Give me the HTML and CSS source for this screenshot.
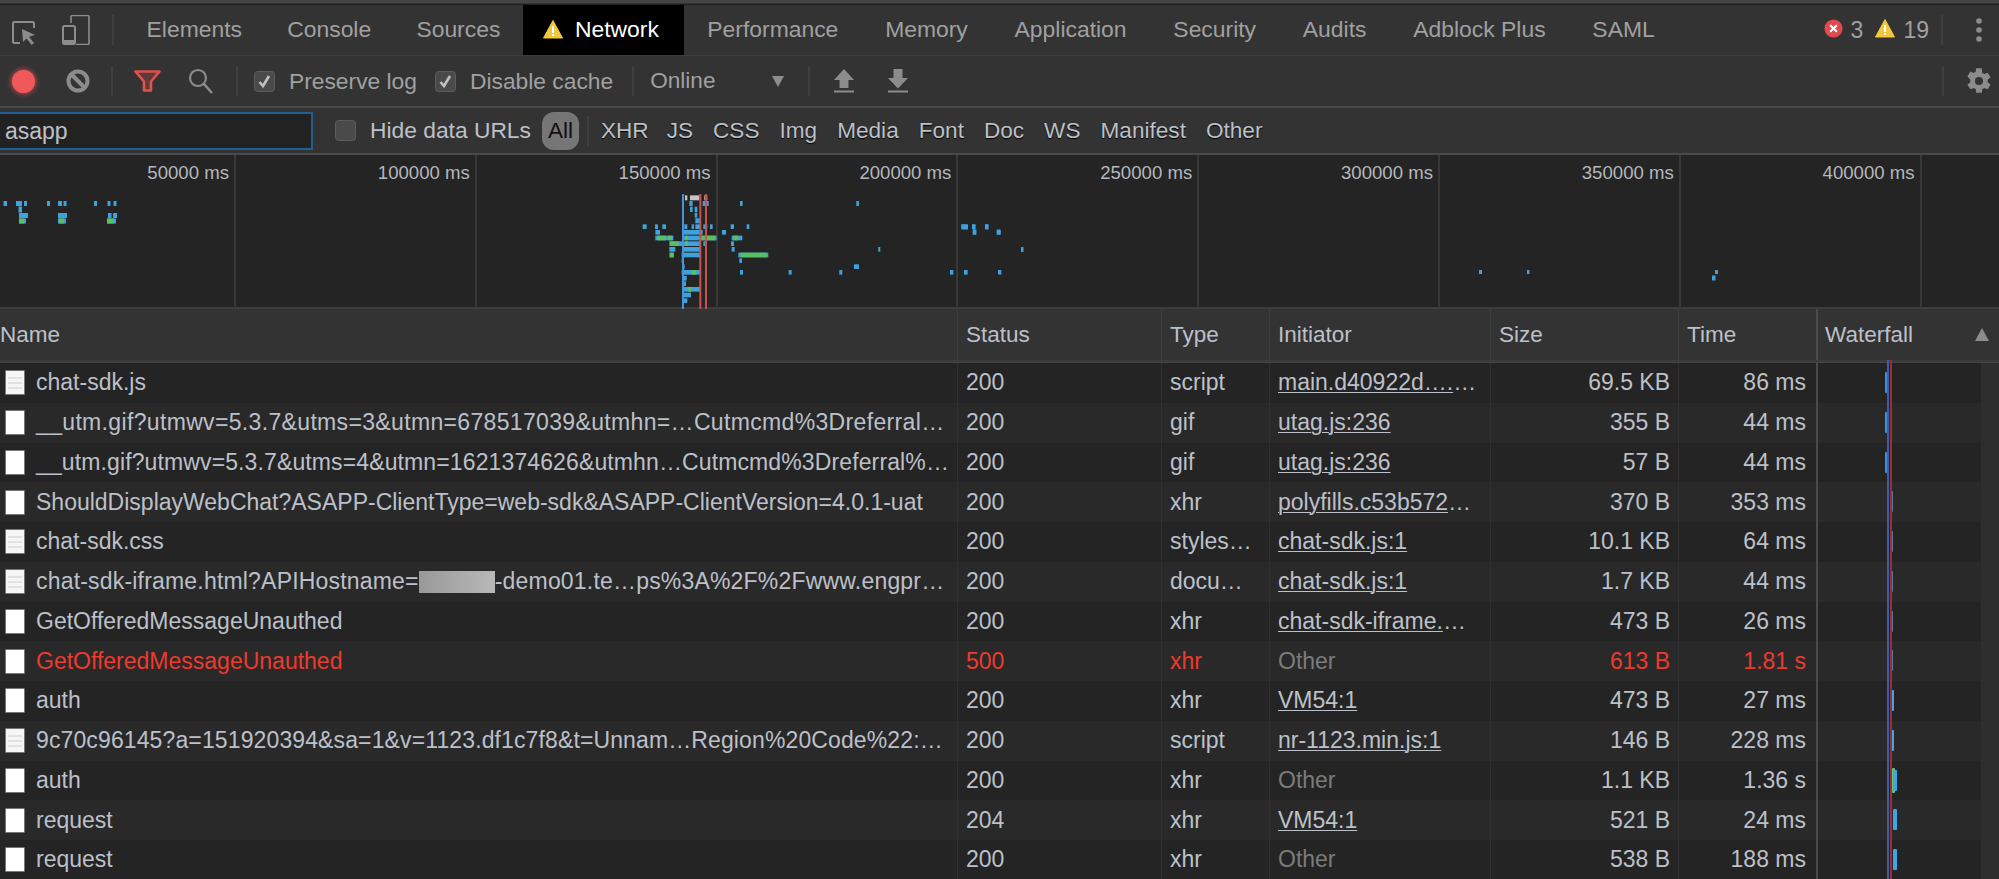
FILE: index.html
```html
<!DOCTYPE html>
<html lang="en">
<head>
<meta charset="utf-8">
<title>Network</title>
<link rel="stylesheet" href="styles.css">
</head>
<body>
<div class="topline"></div>
<nav class="tabbar">
  <svg class="ic-inspect" viewBox="0 0 25 24"><path d="M8 22H2.5A1.5 1.5 0 0 1 1 20.5V2.5A1.5 1.5 0 0 1 2.5 1h18A1.5 1.5 0 0 1 22 2.5V7" fill="none" stroke="#8c8c8c" stroke-width="2"/><path d="M10 8l13 6-6 1.8 5 6.2-2.4 2-5-6.4L11 21z" fill="#8c8c8c"/></svg>
  <svg class="ic-device" viewBox="0 0 28 30"><path d="M9 8V2a1.5 1.5 0 0 1 1.5-1.5h15A1.5 1.5 0 0 1 27 2v26a1.5 1.5 0 0 1-1.5 1.5H14" fill="none" stroke="#8c8c8c" stroke-width="1.6"/><rect x="1" y="11" width="12" height="18" rx="1.5" fill="none" stroke="#8c8c8c" stroke-width="2"/><rect x="2" y="25" width="10" height="3" fill="#8c8c8c"/></svg>
  <span class="sep sep-tab"></span>
  <a class="tab">Elements</a>
  <a class="tab">Console</a>
  <a class="tab">Sources</a>
  <a class="tab tab-on"><svg class="ic-warn" viewBox="0 0 20 20"><path d="M10 1.5 19.5 19H.5z" fill="#f4c63d" stroke="#f4c63d" stroke-linejoin="round"/><rect x="9" y="7" width="2" height="7" fill="#fff"/><rect x="9" y="15" width="2" height="2" fill="#fff"/></svg>Network</a>
  <a class="tab">Performance</a>
  <a class="tab">Memory</a>
  <a class="tab">Application</a>
  <a class="tab">Security</a>
  <a class="tab">Audits</a>
  <a class="tab">Adblock Plus</a>
  <a class="tab">SAML</a>
  <div class="counts">
    <svg class="ic-err" viewBox="0 0 20 20"><circle cx="10" cy="10" r="9.5" fill="#e04a4e"/><path d="M6.5 6.5l7 7M13.500 6.500l-7 7" stroke="#fff" stroke-width="2.200"/></svg>
    <span class="count">3</span>
    <svg class="ic-warn2" viewBox="0 0 20 20"><path d="M10 1.500 19.500 19H.5z" fill="#f4c63d" stroke="#f4c63d" stroke-linejoin="round"/><rect x="9" y="7" width="2" height="7" fill="#fff"/><rect x="9" y="15" width="2" height="2" fill="#fff"/></svg>
    <span class="count">19</span>
    <span class="sep sep-count"></span>
    <svg class="ic-dots" viewBox="0 0 6 24"><circle cx="3" cy="3" r="2.800" fill="#8c8c8c"/><circle cx="3" cy="12" r="2.800" fill="#8c8c8c"/><circle cx="3" cy="21" r="2.800" fill="#8c8c8c"/></svg>
  </div>
</nav>
<div class="toolbar">
  <span class="record"></span>
  <svg class="ic-clear" viewBox="0 0 24 24"><circle cx="12" cy="12" r="9.500" fill="none" stroke="#8c8c8c" stroke-width="4"/><path d="M5 5l14 14" stroke="#8c8c8c" stroke-width="4"/></svg>
  <span class="sep sep-a"></span>
  <svg class="ic-filter" viewBox="0 0 27 22"><path d="M1.500 1.500h24L17 11.500V20.500h-7V11.500z" fill="#5d3b39" stroke="#e0524c" stroke-width="2.600" stroke-linejoin="round"/></svg>
  <svg class="ic-search" viewBox="0 0 25 26"><circle cx="10" cy="10" r="8" fill="none" stroke="#8c8c8c" stroke-width="2.200"/><path d="M16 16l8 9" stroke="#8c8c8c" stroke-width="2.600"/></svg>
  <span class="sep sep-b"></span>
  <label class="check check-p"><svg class="box" viewBox="0 0 21 21"><rect x=".5" y=".5" width="20" height="20" rx="3" fill="#4a4a4a" stroke="#5c5c5c"/><path d="M5.500 11l3.500 4 6-10" fill="none" stroke="#c0c0c0" stroke-width="2.600"/></svg>Preserve log</label>
  <label class="check check-d"><svg class="box" viewBox="0 0 21 21"><rect x=".5" y=".5" width="20" height="20" rx="3" fill="#4a4a4a" stroke="#5c5c5c"/><path d="M5.500 11l3.500 4 6-10" fill="none" stroke="#c0c0c0" stroke-width="2.600"/></svg>Disable cache</label>
  <span class="sep sep-c"></span>
  <span class="throttle">Online</span>
  <span class="caret"></span>
  <span class="sep sep-d"></span>
  <svg class="ic-up" viewBox="0 0 20 24"><path d="M10 0l10 11h-5.500v8h-9v-8H0z" fill="#8c8c8c"/><rect y="21.500" width="20" height="2" fill="#8c8c8c"/></svg>
  <svg class="ic-down" viewBox="0 0 20 24"><path d="M10 19.500L0 9h5.500V0h9v9H20z" fill="#8c8c8c"/><rect y="21.500" width="20" height="2" fill="#8c8c8c"/></svg>
  <span class="sep sep-e"></span>
  <svg class="ic-gear" viewBox="0 0 24 24"><path fill="#8c8c8c" d="M19.400 13a7.700 7.700 0 0 0 0-2l2.500-1.900-2.400-4.200-3 1.200a7.600 7.600 0 0 0-1.700-1L14.400 1H9.600l-.4 3.100a7.600 7.600 0 0 0-1.700 1l-3-1.200-2.400 4.200L4.600 11a7.700 7.700 0 0 0 0 2l-2.500 1.900 2.400 4.200 3-1.200a7.600 7.600 0 0 0 1.700 1l.4 3.100h4.800l.4-3.100a7.600 7.600 0 0 0 1.700-1l3 1.200 2.400-4.200zM12 15.500a3.500 3.500 0 1 1 0-7 3.500 3.500 0 0 1 0 7z"/></svg>
</div>
<div class="filterbar">
  <div class="search-input">asapp</div>
  <label class="check check-h"><svg class="box" viewBox="0 0 21 21"><rect x=".5" y=".5" width="20" height="20" rx="3" fill="#4a4a4a" stroke="#5c5c5c"/></svg>Hide data URLs</label>
  <span class="pill">All</span>
  <span class="sep sep-f"></span>
  <span class="ft">XHR</span><span class="ft">JS</span><span class="ft">CSS</span><span class="ft">Img</span><span class="ft">Media</span><span class="ft">Font</span><span class="ft">Doc</span><span class="ft">WS</span><span class="ft">Manifest</span><span class="ft">Other</span>
</div>
<section class="overview">
  <div class="ov-grid">
    <div class="ov-cell">50000 ms</div>
    <div class="ov-cell">100000 ms</div>
    <div class="ov-cell">150000 ms</div>
    <div class="ov-cell">200000 ms</div>
    <div class="ov-cell">250000 ms</div>
    <div class="ov-cell">300000 ms</div>
    <div class="ov-cell">350000 ms</div>
    <div class="ov-cell">400000 ms</div>
    <div class="ov-cell ov-last"></div>
  </div>
  <svg class="ov-chart" viewBox="0 155 1999 154">
    <g class="d-b">
      <rect x="3.500" y="201" width="3.500" height="5"/><rect x="16" y="201" width="6" height="5"/><rect x="24" y="201" width="3" height="5"/><rect x="47" y="201" width="3" height="5"/><rect x="58" y="201" width="4" height="5"/><rect x="63.500" y="201" width="3" height="5"/><rect x="94" y="201" width="3" height="5"/><rect x="107.500" y="201" width="3" height="5"/><rect x="113.500" y="201" width="3" height="5"/>
      <rect x="18.500" y="206.500" width="3.500" height="6"/>
      <rect x="19" y="213" width="9" height="5"/><rect x="58" y="213" width="9" height="5"/><rect x="108" y="213" width="3.500" height="5"/><rect x="113" y="213" width="4" height="5"/>
      <rect x="19" y="218.500" width="7" height="5"/><rect x="58" y="218.500" width="8" height="5"/><rect x="107" y="218.500" width="9" height="5"/>
    </g>
    <g class="d-g"><rect x="19" y="218.500" width="5" height="5"/><rect x="59" y="218.500" width="5" height="5"/><rect x="107" y="218.500" width="7" height="5"/></g>
    <g transform="translate(620 180) scale(.3333)">
      <g class="d-w"><rect x="195" y="46" width="7" height="15"/><rect x="210" y="46" width="28" height="15"/><rect x="253" y="46" width="9" height="15"/></g>
      <g class="d-b">
        <rect x="208" y="63" width="10" height="15"/><rect x="248" y="63" width="18" height="15"/><rect x="360" y="63" width="8" height="15"/><rect x="709" y="63" width="8" height="15"/>
        <rect x="210" y="80" width="8" height="16"/><rect x="224" y="80" width="8" height="16"/>
        <rect x="224" y="98" width="8" height="15"/>
        <rect x="226" y="115" width="14" height="15"/>
        <rect x="68" y="133" width="12" height="14"/><rect x="105" y="133" width="9" height="14"/><rect x="127" y="133" width="11" height="14"/><rect x="193" y="133" width="9" height="14"/><rect x="215" y="133" width="7" height="14"/><rect x="226" y="133" width="14" height="14"/><rect x="250" y="133" width="12" height="14"/><rect x="270" y="133" width="8" height="14"/><rect x="332" y="133" width="10" height="14"/><rect x="380" y="133" width="8" height="14"/><rect x="1024" y="133" width="18" height="14"/><rect x="1056" y="133" width="10" height="14"/><rect x="1095" y="133" width="10" height="14"/>
        <rect x="106" y="150" width="14" height="14"/><rect x="192" y="150" width="56" height="14"/><rect x="306" y="150" width="12" height="14"/><rect x="1058" y="150" width="10" height="14"/><rect x="1130" y="150" width="12" height="14"/>
        <rect x="106" y="167" width="54" height="14"/><rect x="190" y="167" width="100" height="14"/><rect x="335" y="167" width="32" height="14"/>
        <rect x="148" y="184" width="92" height="14"/><rect x="250" y="184" width="6" height="14"/><rect x="333" y="184" width="9" height="14"/>
        <rect x="148" y="201" width="18" height="14"/><rect x="190" y="201" width="50" height="14"/><rect x="335" y="201" width="9" height="14"/><rect x="775" y="201" width="6" height="14"/>
        <rect x="148" y="218" width="14" height="14"/><rect x="185" y="218" width="55" height="14"/><rect x="355" y="218" width="90" height="14"/>
        <rect x="185" y="235" width="5" height="14"/><rect x="358" y="235" width="8" height="14"/>
        <rect x="188" y="253" width="6" height="14"/><rect x="702" y="253" width="15" height="14"/>
        <rect x="185" y="270" width="55" height="14"/><rect x="360" y="270" width="9" height="14"/><rect x="506" y="270" width="9" height="14"/><rect x="658" y="270" width="9" height="14"/><rect x="990" y="270" width="10" height="14"/><rect x="1032" y="270" width="11" height="14"/><rect x="1136" y="270" width="8" height="14"/>
        <rect x="190" y="288" width="10" height="14"/>
        <rect x="190" y="304" width="8" height="14"/>
        <rect x="186" y="321" width="54" height="14"/>
        <rect x="190" y="338" width="23" height="14"/>
        <rect x="192" y="355" width="10" height="14"/>
      </g>
      <g class="d-g">
        <rect x="112" y="167" width="26" height="14"/><rect x="144" y="167" width="12" height="14"/><rect x="195" y="167" width="8" height="14"/><rect x="245" y="167" width="40" height="14"/><rect x="340" y="167" width="15" height="14"/>
        <rect x="150" y="184" width="26" height="14"/><rect x="196" y="184" width="8" height="14"/>
        <rect x="150" y="218" width="10" height="14"/><rect x="362" y="218" width="78" height="14"/>
        <rect x="215" y="270" width="14" height="14"/><rect x="205" y="321" width="8" height="14"/>
      </g>
      <rect class="l-b" x="186" y="42" width="6" height="345"/>
      <rect class="l-r" x="238" y="42" width="6" height="345"/>
      <rect class="l-r" x="255" y="42" width="6" height="345"/>
    </g>
    <g class="d-b">
      <rect x="961.500" y="224.500" width="6.500" height="5"/><rect x="972" y="224.500" width="3.500" height="5"/><rect x="985" y="224.500" width="3.500" height="5"/>
      <rect x="973" y="229.500" width="3.500" height="5"/><rect x="997" y="229.500" width="3.500" height="5"/>
      <rect x="1021" y="247" width="2.500" height="5"/>
      <rect x="998" y="270" width="3" height="4"/><rect x="1479" y="270" width="3" height="4"/><rect x="1527" y="270" width="2.500" height="4"/><rect x="1715" y="270" width="3" height="4"/>
      <rect x="1712" y="275.500" width="3.500" height="5"/>
    </g>
  </svg>
</section>
<section class="table">
  <div class="row head">
    <div>Name</div><div>Status</div><div>Type</div><div>Initiator</div><div>Size</div><div>Time</div><div class="wf-head">Waterfall<span class="sort"></span></div>
  </div>
  <div class="double"></div>
  <div class="rows">
    <div class="row"><div class="name"><i class="file lines"></i><span>chat-sdk.js</span></div><div>200</div><div>script</div><div><u>main.d40922d….</u>…</div><div class="num">69.5 KB</div><div class="num">86 ms</div><div class="wf"><b class="bar early"></b></div></div>
    <div class="row"><div class="name"><i class="file"></i><span class="fit-a">__utm.gif?utmwv=5.3.7&amp;utms=3&amp;utmn=678517039&amp;utmhn=…Cutmcmd%3Dreferral…</span></div><div>200</div><div>gif</div><div><u>utag.js:236</u></div><div class="num">355 B</div><div class="num">44 ms</div><div class="wf"><b class="bar early"></b></div></div>
    <div class="row"><div class="name"><i class="file"></i><span class="fit-b">__utm.gif?utmwv=5.3.7&amp;utms=4&amp;utmn=1621374626&amp;utmhn…Cutmcmd%3Dreferral%…</span></div><div>200</div><div>gif</div><div><u>utag.js:236</u></div><div class="num">57 B</div><div class="num">44 ms</div><div class="wf"><b class="bar early"></b></div></div>
    <div class="row"><div class="name"><i class="file"></i><span>ShouldDisplayWebChat?ASAPP-ClientType=web-sdk&amp;ASAPP-ClientVersion=4.0.1-uat</span></div><div>200</div><div>xhr</div><div><u>polyfills.c53b572</u>…</div><div class="num">370 B</div><div class="num">353 ms</div><div class="wf"><b class="bar thin"></b></div></div>
    <div class="row"><div class="name"><i class="file lines"></i><span>chat-sdk.css</span></div><div>200</div><div>styles…</div><div><u>chat-sdk.js:1</u></div><div class="num">10.1 KB</div><div class="num">64 ms</div><div class="wf"><b class="bar thin"></b></div></div>
    <div class="row"><div class="name"><i class="file lines"></i><span class="fit-c">chat-sdk-iframe.html?APIHostname=<em class="redact"></em>-demo01.te…ps%3A%2F%2Fwww.engpr…</span></div><div>200</div><div>docu…</div><div><u>chat-sdk.js:1</u></div><div class="num">1.7 KB</div><div class="num">44 ms</div><div class="wf"><b class="bar thin"></b></div></div>
    <div class="row"><div class="name"><i class="file"></i><span>GetOfferedMessageUnauthed</span></div><div>200</div><div>xhr</div><div><u>chat-sdk-iframe.</u>…</div><div class="num">473 B</div><div class="num">26 ms</div><div class="wf"><b class="bar thin"></b></div></div>
    <div class="row err"><div class="name"><i class="file"></i><span>GetOfferedMessageUnauthed</span></div><div>500</div><div>xhr</div><div class="dim">Other</div><div class="num">613 B</div><div class="num">1.81 s</div><div class="wf"><b class="bar thin"></b></div></div>
    <div class="row"><div class="name"><i class="file"></i><span>auth</span></div><div>200</div><div>xhr</div><div><u>VM54:1</u></div><div class="num">473 B</div><div class="num">27 ms</div><div class="wf"><b class="bar late"></b></div></div>
    <div class="row"><div class="name"><i class="file lines"></i><span class="fit-d">9c70c96145?a=151920394&amp;sa=1&amp;v=1123.df1c7f8&amp;t=Unnam…Region%20Code%22:…</span></div><div>200</div><div>script</div><div><u>nr-1123.min.js:1</u></div><div class="num">146 B</div><div class="num">228 ms</div><div class="wf"><b class="bar late"></b></div></div>
    <div class="row"><div class="name"><i class="file"></i><span>auth</span></div><div>200</div><div>xhr</div><div class="dim">Other</div><div class="num">1.1 KB</div><div class="num">1.36 s</div><div class="wf"><b class="bar green"></b><b class="bar later"></b></div></div>
    <div class="row"><div class="name"><i class="file"></i><span>request</span></div><div>204</div><div>xhr</div><div><u>VM54:1</u></div><div class="num">521 B</div><div class="num">24 ms</div><div class="wf"><b class="bar later"></b></div></div>
    <div class="row"><div class="name"><i class="file"></i><span>request</span></div><div>200</div><div>xhr</div><div class="dim">Other</div><div class="num">538 B</div><div class="num">188 ms</div><div class="wf"><b class="bar later"></b></div></div>
    <span class="wf-line wf-blue"></span>
    <span class="wf-line wf-red"></span>
  </div>
</section>
</body>
</html>
```
FILE: styles.css
```css
* { box-sizing: border-box; }
html, body { margin: 0; height: 879px; overflow: hidden; }
body { background: #333; font-family: "Liberation Sans", Arial, sans-serif; font-size: 23px; color: #bcc0c9; }
svg { display: block; flex: none; }

.topline { height: 5px; background: #333; border-top: 3px solid #444; border-bottom: 1px solid #1f1f1f; }

.sep { display: block; flex: none; width: 2px; height: 30px; background: #3f3f3f; }

/* tab bar */
.tabbar { display: flex; align-items: center; height: 51px; background: #333; border-bottom: 1px solid #3d3d3d; }
.ic-inspect { width: 25px; height: 24px; margin: 6px 0 0 12px; }
.ic-device { width: 28px; height: 30px; margin-left: 25px; }
.sep-tab { margin-left: 22px; }
.tab { display: flex; align-items: center; height: 50px; padding: 0 22.6px 2px; font-size: 22.9px; color: #a0a0a0; }
.sep-tab + .tab { margin-left: 10px; }
.tab-on { background: #000; color: #fff; padding: 0 25px 2px 20px; }
.tab-on ~ .tab { padding: 0 23.4px 2px; }
.ic-warn { width: 20px; height: 20px; margin-right: 12px; }
.counts { display: flex; align-items: center; margin-left: auto; color: #a0a0a0; font-size: 23px; }
.ic-err { width: 19px; height: 19px; margin: -4px 8px 0 0; }
.count { line-height: 30px; }
.ic-warn2 { width: 20px; height: 20px; margin: -4px 8px 0 12px; }
.sep-count { margin-left: 12px; }
.ic-dots { width: 6px; height: 24px; margin: 0 17px 0 33px; }

/* toolbar */
.toolbar { display: flex; align-items: center; height: 52px; border-bottom: 2px solid #4a4a4a; }
.record { width: 23px; height: 23px; margin-left: 12px; border-radius: 50%; background: #f0585a; box-shadow: 0 0 5px 1px #b84a4a; flex: none; }
.ic-clear { width: 24px; height: 24px; margin-left: 31px; }
.sep-a { margin-left: 21px; }
.ic-filter { width: 27px; height: 22px; margin-left: 21px; }
.ic-search { width: 25px; height: 26px; margin-left: 27px; }
.sep-b { margin-left: 23px; }
.check { display: flex; align-items: center; font-size: 22.8px; color: #a0a0a0; }
.box { width: 21px; height: 21px; margin-right: 14px; }
.check-p { margin-left: 16px; }
.check-d { margin-left: 18px; }
.sep-c { margin-left: 19px; }
.throttle { margin-left: 16px; font-size: 22.6px; color: #a0a0a0; }
.caret { width: 0; height: 0; margin-left: 56px; border: 6.5px solid transparent; border-top: 11px solid #8c8c8c; border-bottom: 0; flex: none; }
.sep-d { margin-left: 24px; }
.ic-up { width: 20px; height: 24px; margin-left: 24px; }
.ic-down { width: 20px; height: 24px; margin-left: 34px; }
.sep-e { margin-left: auto; }
.ic-gear { width: 28px; height: 28px; margin: 0 6px 0 21px; }

/* filter bar */
.filterbar { display: flex; align-items: center; height: 47px; border-bottom: 2px solid #4a4a4a; }
.search-input { width: 313px; height: 38px; padding-left: 5px; line-height: 35px; background: #222; border: 2px solid #1f5f94; border-left: 0; color: #bcc0c9; font-size: 23px; flex: none; }
.check-h { margin-left: 22px; color: #bcc0c9; }
.pill { flex: none; width: 37px; height: 38px; margin-left: 11px; border-radius: 12px; background: #767676; color: #111; text-align: center; line-height: 38px; font-size: 22.6px; }
.sep-f { margin-left: 8px; height: 30px; }
.ft { margin-left: 20px; font-size: 22.6px; color: #bcc0c9; text-shadow: 0 1px 1px #000; }
.sep-f + .ft { margin: 0 -2px 0 12px; }

/* overview */
.overview { position: relative; height: 154px; background: #242424; border-bottom: 2px solid #3c3c3c; }
.ov-grid { display: grid; grid-template-columns: 236px repeat(7, 240.8px) 1fr; height: 152px; }
.ov-cell { padding: 7px 5px 0 0; text-align: right; font-size: 18.6px; color: #b4b7bd; border-right: 2px solid #383838; }
.ov-last { border-right: 0; }
.ov-chart { position: absolute; left: 0; top: 0; width: 1999px; height: 154px; }
.d-b { fill: #3ea2dc; }
.d-g { fill: #58c060; }
.d-w { fill: #c4c4c4; }
.l-b { fill: #4a93d6; }
.l-r { fill: #c9524a; }

/* table */
.row { display: grid; grid-template-columns: 957px 204px 108px 221px 188px 138px 1fr; align-items: center; height: 39.75px; }
.row > div { height: 100%; display: flex; align-items: center; padding-left: 8px; border-left: 1px solid #303030; white-space: nowrap; overflow: hidden; }
.row > div:first-child { border-left: 0; padding-left: 5px; }
.rows { position: relative; }
.rows .row:nth-child(odd) { background: #242424; }
.rows .row:nth-child(even) { background: #292929; }
.head { height: 51px; background: #333; font-size: 22.5px; color: #bcc0c9; }
.head > div { border-left: 1px solid #3e3e3e; }
.row.head > div:first-child { padding-left: 0; }
.double { height: 3px; background: #3c3c3c; border-bottom: 1px solid #444; }
.wf-head { position: relative; }
.sort { position: absolute; right: 10px; top: 19px; width: 0; height: 0; border: 7.5px solid transparent; border-bottom: 13px solid #8c8c8c; border-top: 0; }
.row > .wf-head, .row > .wf { border-left: 2px solid #4a4a4a; }
.row > .wf-head { padding-left: 7px; }
.file { display: block; flex: none; width: 20px; height: 25px; margin-right: 11px; background-color: #fff; border: 1px solid #777; border-radius: 1px; }
.file.lines { background-color: #f6f6f6; background-image: repeating-linear-gradient(to bottom, transparent 0 3px, #e2e2e2 3px 5px); background-size: 14px 18px; background-repeat: no-repeat; background-position: 2px 3px; }
.row u { text-decoration-thickness: 1px; text-underline-offset: 2px; }
.num { justify-content: flex-end; padding-right: 8px; }
.row > .num:nth-child(6) { padding-right: 10px; }
.dim { color: #7b7b7b; }
.err { color: #ee3a2d; }
.err .dim { color: #7b7b7b; }
.fit-a { letter-spacing: .34px; }
.fit-b { letter-spacing: .12px; }
.fit-c { letter-spacing: .19px; }
.fit-d { letter-spacing: .12px; }
.redact { display: inline-block; width: 76px; height: 22px; vertical-align: -4px; background: linear-gradient(to right, #999, #b8b8b8); }
.wf { position: relative; }
.row > .wf:last-child { padding: 0; background: linear-gradient(to right, transparent 163px, #2e2e2e 163px); }
.bar { position: absolute; top: 9px; height: 21px; border-radius: 1px; }
.early { left: 67px; width: 3px; background: #3a8fdc; }
.thin { left: 73px; width: 2px; background: #5a7a9a; }
.late { left: 73px; width: 3px; background: #3ea6e6; }
.later { left: 75px; width: 4px; background: #3ea6e6; }
.green { left: 74px; top: 7px; height: 25px; width: 3px; background: #62c466; }
.wf-line { position: absolute; top: -3px; bottom: 0; width: 2px; }
.wf-blue { left: 1887px; background: #2f62b0; }
.wf-red { left: 1889.5px; background: #a62a2a; }
```
